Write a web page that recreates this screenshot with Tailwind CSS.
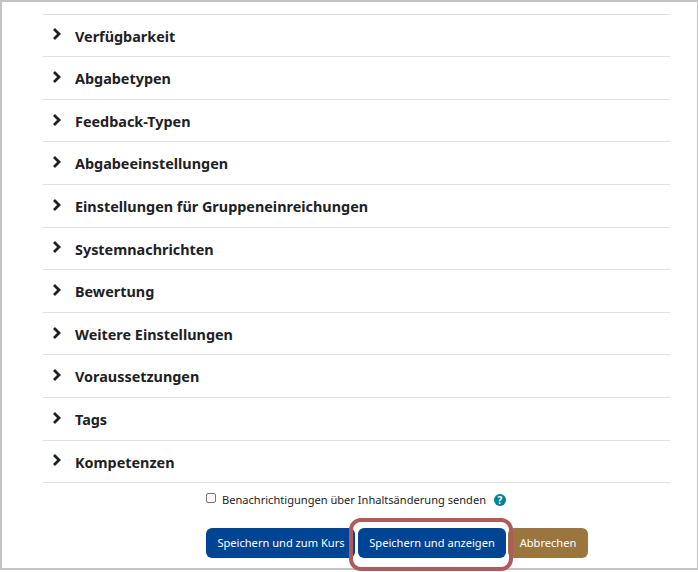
<!DOCTYPE html>
<html lang="de">
<head>
<meta charset="utf-8">
<script src="https://cdn.jsdelivr.net/npm/@tailwindcss/browser@4"></script>
<title>Einstellungen</title>
</head>
<body class="bg-white overflow-hidden">
<div class="relative w-[698px] h-[572px] font-['Noto_Sans',sans-serif] text-[#1d2125]">
  <div class="w-[698px] h-[570px] border-2 border-b-[2px] border-r border-[#c4c4c4] pt-[11.6px] pl-[41px]">
    <div class="w-[627px] border-t border-[#dee2e6]">
      <div class="h-[41.6px] box-content border-b border-[#dee2e6] flex items-center"><svg class="w-[10px] h-[12px] ml-[9px] mr-[13px] -mt-[2px]" viewBox="0 0 10 12" fill="none" stroke="#1d2125" stroke-width="2.8"><path d="M2 1l5 5-5 5"/></svg><span class="mt-[2px] text-[14.4px] font-bold">Verfügbarkeit</span></div>
      <div class="h-[41.6px] box-content border-b border-[#dee2e6] flex items-center"><svg class="w-[10px] h-[12px] ml-[9px] mr-[13px] -mt-[2px]" viewBox="0 0 10 12" fill="none" stroke="#1d2125" stroke-width="2.8"><path d="M2 1l5 5-5 5"/></svg><span class="mt-[2px] text-[14.4px] font-bold">Abgabetypen</span></div>
      <div class="h-[41.6px] box-content border-b border-[#dee2e6] flex items-center"><svg class="w-[10px] h-[12px] ml-[9px] mr-[13px] -mt-[2px]" viewBox="0 0 10 12" fill="none" stroke="#1d2125" stroke-width="2.8"><path d="M2 1l5 5-5 5"/></svg><span class="mt-[2px] text-[14.4px] font-bold">Feedback-Typen</span></div>
      <div class="h-[41.6px] box-content border-b border-[#dee2e6] flex items-center"><svg class="w-[10px] h-[12px] ml-[9px] mr-[13px] -mt-[2px]" viewBox="0 0 10 12" fill="none" stroke="#1d2125" stroke-width="2.8"><path d="M2 1l5 5-5 5"/></svg><span class="mt-[2px] text-[14.4px] font-bold">Abgabeeinstellungen</span></div>
      <div class="h-[41.6px] box-content border-b border-[#dee2e6] flex items-center"><svg class="w-[10px] h-[12px] ml-[9px] mr-[13px] -mt-[2px]" viewBox="0 0 10 12" fill="none" stroke="#1d2125" stroke-width="2.8"><path d="M2 1l5 5-5 5"/></svg><span class="mt-[2px] text-[14.4px] font-bold">Einstellungen für Gruppeneinreichungen</span></div>
      <div class="h-[41.6px] box-content border-b border-[#dee2e6] flex items-center"><svg class="w-[10px] h-[12px] ml-[9px] mr-[13px] -mt-[2px]" viewBox="0 0 10 12" fill="none" stroke="#1d2125" stroke-width="2.8"><path d="M2 1l5 5-5 5"/></svg><span class="mt-[2px] text-[14.4px] font-bold">Systemnachrichten</span></div>
      <div class="h-[41.6px] box-content border-b border-[#dee2e6] flex items-center"><svg class="w-[10px] h-[12px] ml-[9px] mr-[13px] -mt-[2px]" viewBox="0 0 10 12" fill="none" stroke="#1d2125" stroke-width="2.8"><path d="M2 1l5 5-5 5"/></svg><span class="mt-[2px] text-[14.4px] font-bold">Bewertung</span></div>
      <div class="h-[41.6px] box-content border-b border-[#dee2e6] flex items-center"><svg class="w-[10px] h-[12px] ml-[9px] mr-[13px] -mt-[2px]" viewBox="0 0 10 12" fill="none" stroke="#1d2125" stroke-width="2.8"><path d="M2 1l5 5-5 5"/></svg><span class="mt-[2px] text-[14.4px] font-bold">Weitere Einstellungen</span></div>
      <div class="h-[41.6px] box-content border-b border-[#dee2e6] flex items-center"><svg class="w-[10px] h-[12px] ml-[9px] mr-[13px] -mt-[2px]" viewBox="0 0 10 12" fill="none" stroke="#1d2125" stroke-width="2.8"><path d="M2 1l5 5-5 5"/></svg><span class="mt-[2px] text-[14.4px] font-bold">Voraussetzungen</span></div>
      <div class="h-[41.6px] box-content border-b border-[#dee2e6] flex items-center"><svg class="w-[10px] h-[12px] ml-[9px] mr-[13px] -mt-[2px]" viewBox="0 0 10 12" fill="none" stroke="#1d2125" stroke-width="2.8"><path d="M2 1l5 5-5 5"/></svg><span class="mt-[2px] text-[14.4px] font-bold">Tags</span></div>
      <div class="h-[41.6px] box-content border-b border-[#dee2e6] flex items-center"><svg class="w-[10px] h-[12px] ml-[9px] mr-[13px] -mt-[2px]" viewBox="0 0 10 12" fill="none" stroke="#1d2125" stroke-width="2.8"><path d="M2 1l5 5-5 5"/></svg><span class="mt-[2px] text-[14.4px] font-bold">Kompetenzen</span></div>
    </div>
    <div class="flex items-center h-[18px] mt-[8px] ml-[163px]">
      <span class="w-[10px] h-[10px] -mt-[4px] border border-[#767676] rounded-[2px] bg-white"></span>
      <span class="ml-[6px] -mt-[1px] text-[11.08px] leading-none">Benachrichtigungen über Inhaltsänderung senden</span>
      <svg class="w-[12px] h-[12px] ml-[8px]" viewBox="0 0 12 12"><circle cx="6" cy="6" r="6" fill="#008196"/><text x="6" y="9.6" text-anchor="middle" font-size="10" font-weight="700" fill="#fff" font-family="Noto Sans">?</text></svg>
    </div>
    <div class="flex mt-[19px] ml-[163px] text-[11.1px] text-white">
      <button class="w-[149px] h-[30px] mr-[3px] pl-[1px] rounded-[6px] bg-[#004494]">Speichern und zum Kurs</button>
      <button class="w-[148px] h-[30px] mr-[2px] rounded-[6px] bg-[#004494]">Speichern und anzeigen</button>
      <button class="w-[80px] h-[30px] rounded-[6px] bg-[#9a763e]">Abbrechen</button>
    </div>
  </div>
  <div class="absolute left-[349px] top-[518px] w-[164px] h-[53px] border-[4px] border-[#b15a5c] rounded-[12px]"></div>
</div>
</body>
</html>
